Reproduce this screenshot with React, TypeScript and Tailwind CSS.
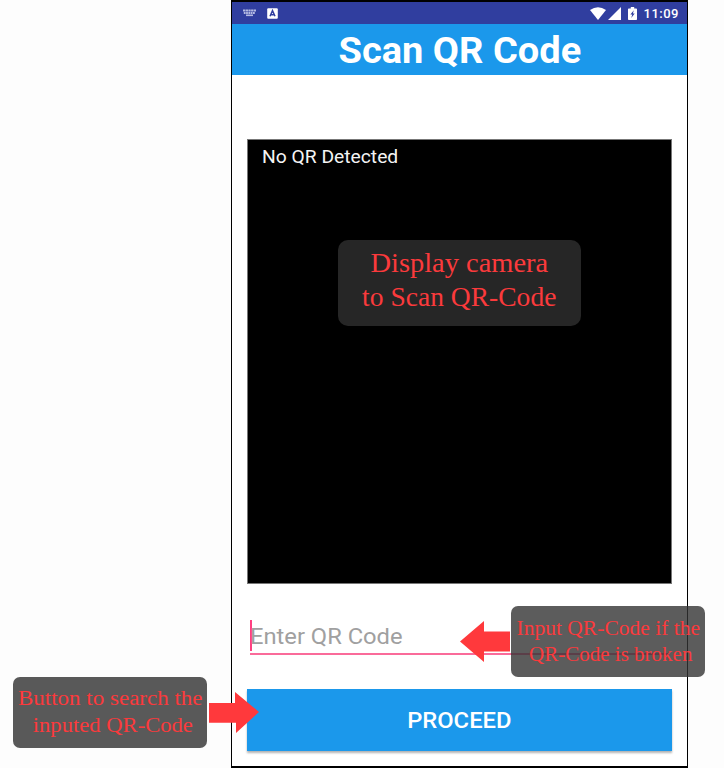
const serif = "font-['Liberation_Serif',serif] text-[#fb3a3c] whitespace-nowrap";

function StatusBar() {
  return (
    <div className="flex h-[22px] items-center justify-between bg-[#303e9f] pl-[11px] pr-[8px] text-white">
      <div className="flex items-center gap-[11px]">
        <svg className="h-[8px] w-[13px]" viewBox="0 0 13 8" fill="none" stroke="#b4bae2">
          <path d="M0 1.5h13" strokeWidth="2" strokeDasharray="2.300 .4" />
          <path d="M.8 4h11.4" strokeWidth="1.800" strokeDasharray="1.800 .5" />
          <path d="M3 6.300h7" strokeWidth="1.600" />
        </svg>
        <svg className="h-[11px] w-[11px]" viewBox="0 0 11 11">
          <rect x="0.2" y="0.2" width="10.6" height="10.6" rx="1" fill="#fff" />
          <path d="M3 8.3 5.5 2.7 8 8.3M3.9 6.8h3.2" fill="none" stroke="#303e9f" strokeWidth="1.5" />
        </svg>
      </div>
      <div className="flex items-center">
        <svg className="h-[13px] w-[16px]" viewBox="0 0 16 13" fill="#fff">
          <path d="M0 3Q8-2.6 16 3L8 13Z" />
        </svg>
        <svg className="ml-[2px] h-[13px] w-[13px]" viewBox="0 0 13 13" fill="#fff">
          <path d="M13 0v13H0Z" />
        </svg>
        <svg className="ml-[7px] h-[13px] w-[9px]" viewBox="0 0 9 13">
          <path d="M2.8 0h3.4v1.4H8.2q.8 0 .8.8v10q0 .8-.8.8H.8Q0 13 0 12.2V2.2q0-.8.8-.8h2Z" fill="#fff" />
          <path d="M5.8 3.2 2.4 7.4h1.9L3.200 11 6.700 6.500H4.900Z" fill="#303e9f" />
        </svg>
        <span className="ml-[7px] text-[13px] font-medium leading-none tracking-[0.5px]">11:09</span>
      </div>
    </div>
  );
}

export default function App() {
  return (
    <main className="relative h-[768px] w-[724px] overflow-hidden bg-[#fdfdfd] pl-[231px] font-['Roboto',sans-serif]">
      <section className="flex h-[768px] w-[457px] flex-col border-x border-t-2 border-b-2 border-black bg-white">
        <StatusBar />
        <header className="flex h-[51px] items-center justify-center bg-[#1b98eb] text-[36px] font-bold leading-none text-white">
          <h1 className="mt-[3px] scale-x-[1.057] whitespace-nowrap">Scan QR Code</h1>
        </header>
        <div className="ml-[15px] mt-[64px] h-[445px] w-[425px] border border-[#777] bg-black pl-[14px] pt-[6px] text-[18px] leading-[21px] text-[#f4f4f4]">
          <span className="inline-block origin-left scale-x-[1.07]">No QR Detected</span>
        </div>
        <div className="ml-[18px] mt-[36px] flex h-[35px] w-[419px] items-center border-b-2 border-[#fa6b9a]">
          <span className="h-[31px] w-[2px] self-start bg-[#ff4081]" />
          <span className="-ml-[2px] origin-left scale-x-[1.078] whitespace-nowrap text-[22px] leading-none text-[#a0a0a0]">Enter QR Code</span>
        </div>
        <button className="ml-[15px] mt-[34px] flex h-[62px] w-[425px] items-center justify-center bg-[#1b98eb] pt-[2px] text-[22px] font-medium leading-none text-white shadow-[0_2px_2px_rgba(0,0,0,0.3)]">
          <span className="scale-x-[1.08]">PROCEED</span>
        </button>
      </section>

      <div className={`${serif} absolute left-[338px] top-[240px] flex h-[86px] w-[243px] flex-col items-center rounded-[10px] bg-[#262626] pt-[6px] text-[27px] leading-[34px]`}>
        <span className="scale-x-[1.054]">Display camera</span>
        <span className="scale-x-[1.02]">to Scan QR-Code</span>
      </div>
      <div className={`${serif} absolute left-[511px] top-[606px] flex h-[71px] w-[194px] flex-col items-center rounded-[7px] bg-[#333]/80 pt-[9px] text-[20px] leading-[26px]`}>
        <span className="scale-x-[1.076]">Input QR-Code if the</span>
        <span className="ml-[5px] scale-x-[1.05]">QR-Code is broken</span>
      </div>
      <div className={`${serif} absolute left-[13px] top-[677px] flex h-[71px] w-[194px] flex-col items-center rounded-[7px] bg-[#595959] pt-[8px] text-[20px] leading-[27px]`}>
        <span className="scale-x-[1.15]">Button to search the</span>
        <span className="ml-[5px] scale-x-[1.13]">inputed QR-Code</span>
      </div>
      <svg className="absolute left-[460px] top-[621px] h-[41px] w-[50px]" viewBox="0 0 50 41" fill="#ff393c">
        <path d="M0 20.5 24 0v10.5h26v20H24V41Z" />
      </svg>
      <svg className="absolute left-[209px] top-[692px] h-[41px] w-[50px]" viewBox="0 0 50 41" fill="#ff393c">
        <path d="M50 20 26 0v11H0v19.7h27V41Z" />
      </svg>
    </main>
  );
}
